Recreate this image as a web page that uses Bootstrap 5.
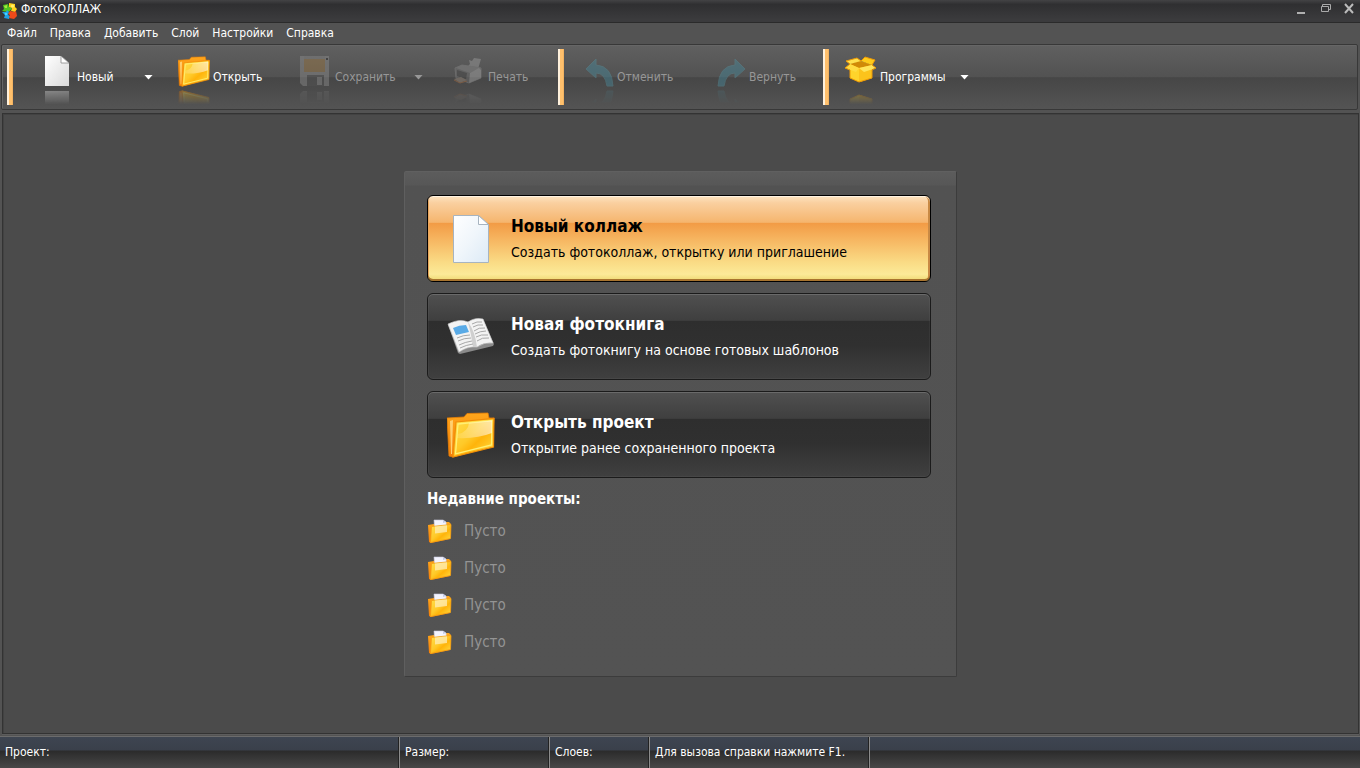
<!DOCTYPE html>
<html lang="ru">
<head>
<meta charset="utf-8">
<meta name="viewport" content="width=device-width, initial-scale=1">
<title>ФотоКОЛЛАЖ</title>
<link href="https://cdn.jsdelivr.net/npm/bootstrap@5.3.0/dist/css/bootstrap.min.css" rel="stylesheet">
<style>
body{font-family:Tahoma,"DejaVu Sans Condensed","Noto Sans",sans-serif;font-size:12px;line-height:16px;color:#fff;background:#535353}
button{font:inherit;color:inherit;background:none;border:0;padding:0;text-align:left}
.titlebar{height:23px;background:linear-gradient(#434345,#2f2f31 20%,#3b3b3d 90%);border-bottom:1px solid #2b2b2b}
.appicon{margin:0 4px 0 2px}
.winbtns{gap:11px}
.menubar{height:21px;padding:2px 7px 0;gap:13px}
.menubar a{color:#fff;text-decoration:none}
.toolbar{height:66px;margin:0 2px 0 1px;border:1px solid #383838;border-radius:2px;box-shadow:inset 1px 1px #666;padding:4px 5px;background:linear-gradient(#606060,#525252 50%,#464646 51%,#545454)}
.grip{width:6px;height:56px;background:linear-gradient(90deg,#fff1dc 0 33%,#ffc06c 34% 80%,#e9a95a)}
.grip-a{margin-right:32px}.grip-b{margin-right:21px}.grip-c{margin-right:16px}
.tool{display:flex;align-items:center;gap:3px;height:56px;margin-right:25px;white-space:nowrap}
.tool svg.pic{width:32px;height:32px;align-self:flex-start;margin-top:6px;-webkit-box-reflect:below 3px linear-gradient(transparent 55%,rgba(0,0,0,.4))}
.tool svg.slim{width:29px}
.tool:disabled{color:#979797}
.tool:disabled svg.pic{opacity:.4}
.t-new{width:108px}.t-open{width:97px}.t-save{width:128px;padding-right:5px}.t-print{width:80px}.t-undo{width:107px}.t-redo{width:81px}.t-apps{width:124px}
.drop{width:9px;height:5px;margin-left:auto;background:currentColor;clip-path:polygon(0 0,100% 0,50% 100%)}
.work{margin:3px 1px 0 2px;border:1px solid #333;box-shadow:0 1px #5d5d5d,inset 1px 1px #424242;background:#4b4b4b}
.welcome{width:553px;padding:23px 25px 15px 22px;border:1px solid #3c3c3c;border-top-color:#606060;border-left-color:#5f5f5f;border-radius:2px;background:linear-gradient(#5c5c5c,#575757 13px,#525252 14px,#535353)}
.choices{gap:11px}
.choice{display:flex;align-items:center;gap:16px;height:87px;padding:2px 19px 0;border:1px solid #1b1b1b;border-radius:6px;box-shadow:inset 0 1px #6a6a6a,inset 0 0 0 1px rgba(255,255,255,.04);background:linear-gradient(#505050,#3f3f3f 31%,#2e2e2e 32%,#303030 60%,#404040)}
.choice.hot{color:#000;border-color:#000;background:linear-gradient(#fde3c0,#fad0a0 8%,#f5b56e 31%,#f29b45 32%,#f6b45f 50%,#fadb85 78%,#fcea98 92%,#eed870);box-shadow:inset 0 1px #fff3e2,inset 0 -2px #a8742e,inset 1px 0 #e9a55d,inset -2px 0 #c98a45}
.choice svg{width:48px;height:52px;flex:none}
.choice strong{display:block;font-size:17px;line-height:20px;margin-bottom:6px}
.choice span span{display:block;font-size:14px;line-height:20px}
.recent h2{font-size:15px;line-height:18px;font-weight:700;margin:12px 0 0}
.recent li{height:37px;font-size:15px;color:#949494;gap:12px}
.recent svg{width:25px;height:26px}
.recent ul{margin-top:5px}
.statusbar{height:32px;margin-top:2px;border-top:1px solid #6b6b6b;background:linear-gradient(#3e4551,#3a404b 42%,#2b2b2b 45%,#484848)}
.cell{padding:7px 5px 0;border-left:1px solid #8b8b8b;box-shadow:-1px 0 #222;white-space:nowrap}
.cell:first-child{border:0;flex:0 0 399px}
.c-size{flex:0 0 150px}.c-layers{flex:0 0 100px}.c-help{flex:0 0 220px}
</style>
</head>
<body class="d-flex flex-column min-vh-100">
<svg width="0" height="0" class="position-absolute" aria-hidden="true">
<defs>
<linearGradient id="gold" x1="0" y1="0" x2="1" y2="1"><stop offset="0" stop-color="#ffdf4e"/><stop offset=".45" stop-color="#ffc928"/><stop offset=".6" stop-color="#ffb40a"/><stop offset="1" stop-color="#ffe04a"/></linearGradient>
<linearGradient id="back" x1="0" y1="0" x2="0" y2="1"><stop offset="0" stop-color="#ffa61b"/><stop offset="1" stop-color="#f57f08"/></linearGradient>
<linearGradient id="paper" x1="0" y1="0" x2="1" y2="1"><stop offset="0" stop-color="#fff"/><stop offset=".5" stop-color="#f0f6fb"/><stop offset="1" stop-color="#dceaf6"/></linearGradient>
<linearGradient id="paper2" x1="0" y1="0" x2="1" y2="1"><stop offset="0" stop-color="#fff"/><stop offset="1" stop-color="#d9d9d9"/></linearGradient>
<linearGradient id="shine" x1="0" y1="0" x2="1" y2="0"><stop offset="0" stop-color="#fff" stop-opacity=".1"/><stop offset="1" stop-color="#fff" stop-opacity=".6"/></linearGradient>
<symbol id="folder" viewBox="0 0 48 46">
<path d="M0 6 17 5 20 1.500 41 1 42 6 47 6 45 34 6 45 2 44Z" fill="url(#back)" stroke="#e77f05" stroke-width=".8"/>
<path d="M3 9 6 8 5 42 4 42Z" fill="#ffd071"/>
<path d="M9 10 47 6.500 46.500 35 6 45Z" fill="url(#gold)" stroke="#f08c08" stroke-width="1.200"/>
<path d="M11 12 45 8.500 44.500 33 8.500 42Z" fill="none" stroke="#fff075" stroke-width="1.300"/>
<path d="M22 11 45 8.500 44.800 21Q30 27 10 26L11 22Q21 20 22 11Z" fill="url(#shine)"/>
</symbol>
<symbol id="recentFolder" viewBox="0 0 25 26">
<path d="M1 7 7 6 8 4 22 4 24 6 23 21 4 25 2 24Z" fill="url(#back)"/>
<path d="M7 2 16 2 19 4 20 14 8 15Z" fill="#f3f4ff" stroke="#c7c8dc" stroke-width=".6"/>
<path d="M16 2 16 5 19 4Z" fill="#c6cbe6"/>
<path d="M4.500 8.500 24 6.500 23.500 20.500 3.500 24.500Z" fill="url(#gold)" stroke="#f4a015" stroke-width=".8"/>
<path d="M8 8.500 20 7.200 20 14 8 15.500Z" fill="#ffeeba" opacity=".75"/>
</symbol>
</defs>
</svg>

<header class="titlebar d-flex align-items-center">
<svg class="appicon flex-shrink-0" width="15" height="18" viewBox="0 0 15 18" aria-hidden="true">
<path d="M1 3 6 2 7 5 10 6 8 9 6 10 0 9 2 7Z" fill="#4fc321"/><path d="M7 1 13 2 13 5 15 7 13 10 9 9 10 6 7 5Z" fill="#ffd21c"/><path d="M0 10H4L5 8 7 10 6 13 8 14 7 17 2 16 3 13Z" fill="#1fa2e6"/><path d="M8 9 12 10 14 9 15 14 12 17 7 16 8 13 6 12Z" fill="#ef4a19"/><path d="M2 4 5 3 5 6 3 6Z" fill="#a3e83c"/><circle cx="10.500" cy="4" r="1.600" fill="#fff06a"/><circle cx="4" cy="12" r="1.300" fill="#45d3ff"/>
</svg>
<span class="pb-1">ФотоКОЛЛАЖ</span>
<div class="winbtns ms-auto d-flex align-items-center me-1 pb-1">
<button type="button" class="d-flex" aria-label="Свернуть"><svg width="12" height="12"><path d="M0 10H8" stroke="#b0b0b0" stroke-width="2"/></svg></button>
<button type="button" class="d-flex" aria-label="Восстановить"><svg width="13" height="12" fill="none" stroke="#aaa"><path d="M2.500 3.500V1.500H10.500V6.500H8.500M1.500 3.500H8.500V8.500H1.500Z"/></svg></button>
<button type="button" class="d-flex" aria-label="Закрыть"><svg width="12" height="12"><path d="M1 1 9 10M9 1 1 10" stroke="#bbb" stroke-width="2"/></svg></button>
</div>
</header>

<nav class="menubar d-flex" aria-label="Меню">
<a href="#">Файл</a><a href="#">Правка</a><a href="#">Добавить</a><a href="#">Слой</a><a href="#">Настройки</a><a href="#">Справка</a>
</nav>

<div class="toolbar d-flex" role="toolbar" aria-label="Инструменты">
<i class="grip grip-a"></i>
<button type="button" class="tool t-new"><svg class="pic slim" viewBox="0 0 29 32"><path d="M0 1H16L24 8V31H0Z" fill="url(#paper2)"/><path d="M16 1V8H24Z" fill="#fff" stroke="#8c8c8c" stroke-width=".8"/></svg>Новый<i class="drop"></i></button>
<button type="button" class="tool t-open"><svg class="pic" viewBox="0 0 32 32"><use href="#folder" width="32" height="31" y="1"/></svg>Открыть</button>
<button type="button" class="tool t-save" disabled><svg class="pic" viewBox="0 0 32 32"><path d="M0 1H29V31H3L0 28Z" fill="#969696"/><path d="M4 1H25V17H4Z" fill="#a98045"/><path d="M4 1H25V4H4Z" fill="#8d8d8d"/><path d="M7 20H24V31H7Z" fill="#555"/><path d="M17 22H22V30H17Z" fill="#999"/><path d="M26 3h2v2h-2z" fill="#222"/></svg>Сохранить<i class="drop"></i></button>
<button type="button" class="tool t-print" disabled><svg class="pic" viewBox="0 0 32 32"><path d="M14 12 17 9 16 5 19 6 21 3 28 4 25 14Z" fill="#a8a8a8"/><path d="M2 13 9 10 28 13 28 23 16 28 3 23Z" fill="#777" stroke="#909090"/><path d="M3 13 9 10 28 13 17 18Z" fill="#969696"/><path d="M17 18 26 13 28 15V23L16 28Z" fill="#b8b8b8"/><path d="M4 15 14 18 13 25 4 21Z" fill="#484848"/><path d="M1 24 8 22 14 25 7 28Z" fill="#a89888"/><path d="M1 25 7 28 14 26" fill="none" stroke="#c87840"/></svg>Печать</button>
<i class="grip grip-b"></i>
<button type="button" class="tool t-undo" disabled><svg class="pic slim" viewBox="0 0 29 32"><path d="M1 14 11 4V10Q27 11 28 31H22Q20 18 11 18V23Z" fill="#4590a5" stroke="#5599a8"/></svg>Отменить</button>
<button type="button" class="tool t-redo" disabled><svg class="pic slim" viewBox="0 0 29 32"><path d="M28 14 18 4V10Q2 11 1 31H7Q9 18 18 18V23Z" fill="#4590a5" stroke="#5599a8"/></svg>Вернуть</button>
<i class="grip grip-c"></i>
<button type="button" class="tool t-apps"><svg class="pic" viewBox="0 0 32 32"><path d="M5 9 15 6 27 10V23L15 27 5 23Z" fill="#ffb70b"/><path d="M5 9 14 13V27L5 23Z" fill="#ffd42b"/><path d="M14 13 27 10V23L14 27Z" fill="#fcc31c"/><path d="M5 9 15 6 27 10 14 13Z" fill="#d08a08"/><path d="M5 9 1 6 12 3 16 6Z" fill="#ffe14e"/><path d="M16 6 20 2 30 5 27 10Z" fill="#ffcb1a"/><path d="M5 9 14 13 11 17 0 13Z" fill="#ffdc43"/><path d="M14 13 27 10 31 13 19 17Z" fill="#ffe55b"/><path d="M5 9 1 6 12 3 16 6 20 2 30 5 27 10 31 13 27 15V23L14 27 5 23V15L0 13Z" fill="none" stroke="#ec9907"/></svg>Программы<i class="drop"></i></button>
</div>

<main class="work flex-grow-1 d-flex align-items-center justify-content-center">
<section class="welcome">
<div class="choices d-grid">
<button type="button" class="choice hot"><svg viewBox="0 0 48 52"><path d="M6.500 2.500H31.500L41.500 11.500V49.500H6.500Z" fill="url(#paper)" stroke="#a7b4c0"/><path d="M31.500 2.500V11.500H41.500Z" fill="#fff" stroke="#a7b4c0"/></svg><span><strong>Новый коллаж</strong><span>Создать фотоколлаж, открытку или приглашение</span></span></button>
<button type="button" class="choice"><svg viewBox="0 0 48 52"><path d="M1 14 11 42 13 43 46 35 47 33 36 8Z" fill="#8a8a8a"/><path d="M1 13Q13 7 21 11Q28 6 36 8L46 32Q37 31 30 36Q21 35 12 41Z" fill="#f3f3f3" stroke="#ccc" stroke-width=".6"/><path d="M21 11Q28 20 30 36L26 36Q24 22 21 11Z" fill="#cfcfcf"/><path d="M6 17Q12 14 19 14L22 21 9 24Z" fill="#59aae6"/><path d="M25 13Q30 10 35 11M26 16Q31 13 36 14M27 20Q32 16 38 17M28 23Q33 20 39 20M29 26Q34 23 41 24M30 30Q35 26 42 27M10 27Q16 24 23 24M11 30Q17 27 24 27M12 34Q18 31 25 30M13 37Q19 34 26 33" fill="none" stroke="#a8a8a8"/></svg><span><strong>Новая фотокнига</strong><span>Создать фотокнигу на основе готовых шаблонов</span></span></button>
<button type="button" class="choice"><svg viewBox="0 0 48 52"><use href="#folder" y="3" width="48" height="46"/></svg><span><strong>Открыть проект</strong><span>Открытие ранее сохраненного проекта</span></span></button>
</div>
<div class="recent">
<h2>Недавние проекты:</h2>
<ul class="list-unstyled mb-0">
<li class="d-flex align-items-center"><svg><use href="#recentFolder"/></svg>Пусто</li>
<li class="d-flex align-items-center"><svg><use href="#recentFolder"/></svg>Пусто</li>
<li class="d-flex align-items-center"><svg><use href="#recentFolder"/></svg>Пусто</li>
<li class="d-flex align-items-center"><svg><use href="#recentFolder"/></svg>Пусто</li>
</ul>
</div>
</section>
</main>

<footer class="statusbar d-flex">
<div class="cell">Проект:</div><div class="cell c-size">Размер:</div><div class="cell c-layers">Слоев:</div><div class="cell c-help">Для вызова справки нажмите F1.</div><div class="cell flex-grow-1"></div>
</footer>
<script src="https://cdn.jsdelivr.net/npm/bootstrap@5.3.0/dist/js/bootstrap.bundle.min.js"></script>
</body>
</html>
